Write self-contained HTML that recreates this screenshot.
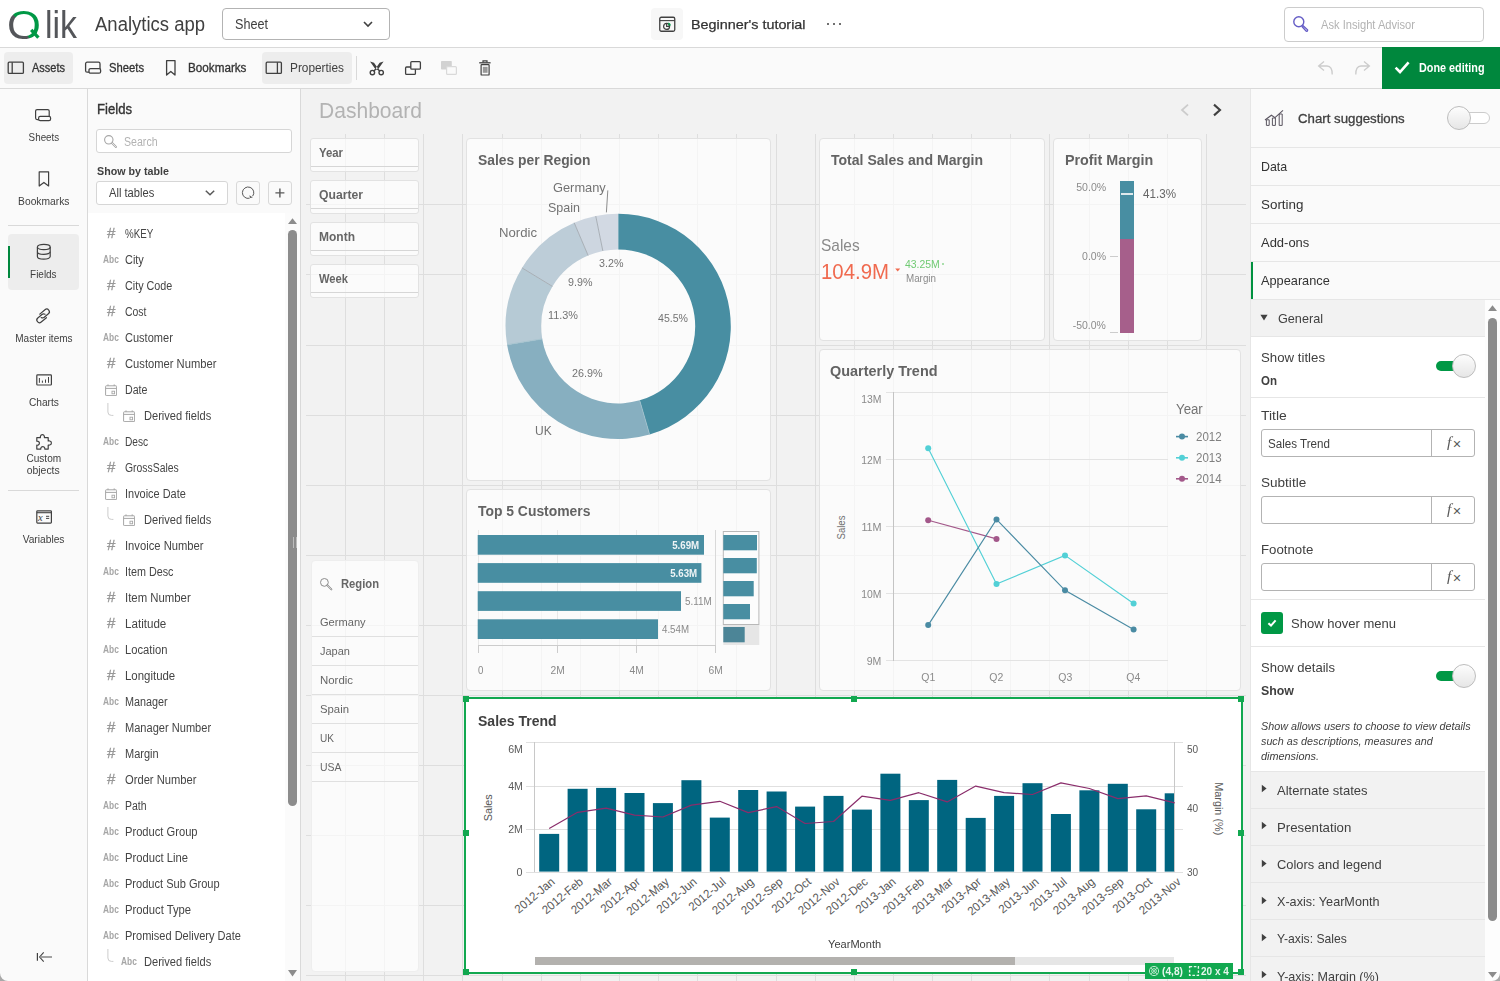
<!DOCTYPE html>
<html lang="en"><head><meta charset="utf-8"><title>Qlik Sense - Beginner's tutorial</title>
<style>
html,body{margin:0;padding:0;background:#fff;}
body{width:1500px;height:981px;overflow:hidden;position:relative;font-family:'Liberation Sans', sans-serif;color:#404040;}
#app{position:absolute;left:0;top:0;width:1500px;height:981px;overflow:hidden;}
#app div,#app svg,#app span.t{position:absolute;box-sizing:border-box;}
#app span.t{white-space:nowrap;transform-origin:0 50%;}
svg text{font-family:'Liberation Sans', sans-serif;}
</style></head><body><div id="app">
<div style="left:0px;top:0px;width:1500px;height:47px;background:#fff;"></div>
<div style="left:0px;top:47px;width:1500px;height:1px;background:#d9d9d9;"></div>
<span class="t" style="left:7.4px;top:5.0px;font-size:40px;line-height:40px;color:transparent;transform:scaleX(1.090);height:34.4px;overflow:hidden;background:conic-gradient(from 0deg at 50% 56%, #009845 0deg, #009845 163deg, #54565a 163deg, #54565a 312deg, #009845 312deg);-webkit-background-clip:text;background-clip:text;">Q</span>
<span class="t" style="left:44.6px;top:6.0px;font-size:38.5px;line-height:38.5px;color:#54565a;transform:scaleX(0.880);">lik</span>
<svg style="left:28px;top:26px;" width="14" height="14" viewBox="0 0 14 14"><path d="M3.2 3.8 L10.4 11.6" stroke="#009845" stroke-width="3.3" fill="none"/></svg>
<span class="t" style="left:95.0px;top:14.0px;font-size:20px;line-height:20px;color:#404040;transform:scaleX(0.925);">Analytics app</span>
<div style="left:222px;top:8px;width:168px;height:32px;border:1px solid #b3b3b3;border-radius:4px;background:#fff;"></div>
<span class="t" style="left:235.0px;top:17.0px;font-size:14px;line-height:14px;color:#404040;transform:scaleX(0.902);">Sheet</span>
<svg style="left:362px;top:19px;" width="12" height="10" viewBox="0 0 12 10"><path d="M2 3 L6 7 L10 3" fill="none" stroke="#404040" stroke-width="1.6"/></svg>
<div style="left:651px;top:8px;width:32px;height:32px;background:#f7f7f7;border-radius:4px;"></div>
<svg style="left:659px;top:16px;" width="17" height="17" viewBox="0 0 17 17"><rect x="0.75" y="1.25" width="15" height="14" rx="1.5" fill="none" stroke="#404040" stroke-width="1.3"/><path d="M0.75 4.6 H15.75" stroke="#404040" stroke-width="1.1"/><circle cx="7.6" cy="10.4" r="3" fill="none" stroke="#404040" stroke-width="1.2"/><path d="M7.6 7.4 V10.4 H10.6" fill="none" stroke="#404040" stroke-width="1.1"/><path d="M9.3 6.6 A3.4 3.4 0 0 1 12 9.4 H9.3 Z" fill="#009845"/></svg>
<span class="t" style="left:691.0px;top:18.0px;font-size:13.5px;line-height:13.5px;color:#333;transform:scaleX(1.064);-webkit-text-stroke:0.25px #333;">Beginner's tutorial</span>
<div style="left:827px;top:23px;width:2px;height:2px;background:#404040;border-radius:1px;"></div>
<div style="left:833px;top:23px;width:2px;height:2px;background:#404040;border-radius:1px;"></div>
<div style="left:839px;top:23px;width:2px;height:2px;background:#404040;border-radius:1px;"></div>
<div style="left:1284px;top:7px;width:200px;height:35px;border:1px solid #ccc;border-radius:4px;background:#fff;"></div>
<svg style="left:1292px;top:15px;" width="18" height="18" viewBox="0 0 18 18"><circle cx="6.8" cy="6.8" r="5" fill="none" stroke="#655dc6" stroke-width="1.4"/><path d="M10.6 10.2 L15.6 14.8 A1.1 1.1 0 0 1 14.2 16.2 L9.7 11.2" fill="none" stroke="#655dc6" stroke-width="1.3"/></svg>
<span class="t" style="left:1321.0px;top:18.0px;font-size:13px;line-height:13px;color:#b3b3b3;transform:scaleX(0.856);">Ask Insight Advisor</span>
<div style="left:0px;top:48px;width:1500px;height:40px;background:#fafafa;"></div>
<div style="left:0px;top:88px;width:1500px;height:1px;background:#d9d9d9;"></div>
<div style="left:4px;top:52px;width:69px;height:32px;background:#ededed;border-radius:4px;"></div>
<svg style="left:7px;top:60px;" width="18" height="16" viewBox="0 0 18 16"><rect x="1.2" y="2.2" width="15.2" height="11.2" rx="1" fill="none" stroke="#404040" stroke-width="1.3"/><path d="M5.2 2.2 V13.4" stroke="#404040" stroke-width="1.3"/></svg>
<span class="t" style="left:32.0px;top:62.0px;font-size:12px;line-height:12px;color:#333;transform:scaleX(0.916);-webkit-text-stroke:0.3px #333;">Assets</span>
<svg style="left:84px;top:60px;" width="18" height="16" viewBox="0 0 18 16"><rect x="1.6" y="2.2" width="14.4" height="10" rx="1.5" fill="none" stroke="#404040" stroke-width="1.3"/><rect x="5" y="8.6" width="11.6" height="4.6" rx="1.5" fill="#fafafa" stroke="#404040" stroke-width="1.3"/></svg>
<span class="t" style="left:108.5px;top:62.0px;font-size:12px;line-height:12px;color:#333;transform:scaleX(0.937);-webkit-text-stroke:0.3px #333;">Sheets</span>
<svg style="left:164px;top:59px;" width="14" height="18" viewBox="0 0 14 18"><path d="M2.6 1.6 H11 V16 L6.8 12.4 L2.6 16 Z" fill="none" stroke="#404040" stroke-width="1.3" stroke-linejoin="round"/></svg>
<span class="t" style="left:187.5px;top:62.0px;font-size:12px;line-height:12px;color:#333;transform:scaleX(0.974);-webkit-text-stroke:0.3px #333;">Bookmarks</span>
<div style="left:262px;top:52px;width:90px;height:32px;background:#ededed;border-radius:4px;"></div>
<svg style="left:265px;top:60px;" width="18" height="16" viewBox="0 0 18 16"><rect x="1.2" y="2.2" width="15.2" height="11.2" rx="1" fill="none" stroke="#404040" stroke-width="1.3"/><path d="M12.4 2.2 V13.4" stroke="#404040" stroke-width="1.3"/></svg>
<span class="t" style="left:290.0px;top:62.0px;font-size:12px;line-height:12px;color:#404040;transform:scaleX(0.987);">Properties</span>
<div style="left:356px;top:56px;width:1px;height:24px;background:#d9d9d9;"></div>
<svg style="left:368px;top:60px;" width="18" height="17" viewBox="0 0 18 17"><path d="M2 1.6 L6 2.8 L10 8.4 L8 10 Z M15.6 1.6 L11.6 2.8 L7.6 8.4 L9.6 10 Z" fill="#404040"/><path d="M8.2 8.8 L5.6 11.2 M9.4 8.8 L12 11.2" stroke="#404040" stroke-width="1.5" fill="none"/><circle cx="4.4" cy="12.6" r="2.2" fill="none" stroke="#404040" stroke-width="1.4"/><circle cx="13.2" cy="12.6" r="2.2" fill="none" stroke="#404040" stroke-width="1.4"/></svg>
<svg style="left:404px;top:60px;" width="18" height="17" viewBox="0 0 18 17"><rect x="1.6" y="7" width="9.8" height="7.4" rx="1" fill="none" stroke="#404040" stroke-width="1.3"/><rect x="6.8" y="1.6" width="9.6" height="7.6" rx="1" fill="#fafafa" stroke="#404040" stroke-width="1.3"/></svg>
<svg style="left:440px;top:60px;" width="18" height="17" viewBox="0 0 18 17"><rect x="1" y="1" width="10.8" height="8.6" rx="0.8" fill="#d2d2d2"/><rect x="6.6" y="6.6" width="9.8" height="7.8" rx="1" fill="#fafafa" stroke="#d9d9d9" stroke-width="1.2"/></svg>
<svg style="left:477px;top:59px;" width="16" height="18" viewBox="0 0 16 18"><path d="M6 3.4 V1.8 H10 V3.4" fill="none" stroke="#404040" stroke-width="1.2"/><path d="M2.2 3.8 H13.6" stroke="#404040" stroke-width="1.3"/><rect x="4.1" y="5.6" width="8" height="10.4" rx="0.6" fill="none" stroke="#404040" stroke-width="1.2"/><rect x="5.8" y="7.8" width="4.8" height="6" fill="#999"/></svg>
<svg style="left:1316px;top:59px;" width="20" height="18" viewBox="0 0 20 18"><path d="M8 2.4 L2.6 7 L8 11.4 M2.8 7 H11 Q16.4 7.2 16.2 15.6" fill="none" stroke="#ccc" stroke-width="1.3"/></svg>
<svg style="left:1352px;top:59px;" width="20" height="18" viewBox="0 0 20 18"><path d="M12 2.4 L17.4 7 L12 11.4 M17.2 7 H9 Q3.6 7.2 3.8 15.6" fill="none" stroke="#ccc" stroke-width="1.3"/></svg>
<div style="left:1382px;top:47px;width:118px;height:42px;background:#00873d;"></div>
<svg style="left:1394px;top:60px;" width="17" height="15" viewBox="0 0 17 15"><path d="M1.6 7.6 L6 12 L14.6 2.4" fill="none" stroke="#fff" stroke-width="2.6"/></svg>
<span class="t" style="left:1419.0px;top:61.0px;font-size:13px;line-height:13px;color:#fff;transform:scaleX(0.832);font-weight:700;">Done editing</span>
<div style="left:0px;top:89px;width:87px;height:892px;background:#fafafa;"></div>
<div style="left:87px;top:89px;width:1px;height:892px;background:#d9d9d9;"></div>
<svg style="left:33px;top:107px;" width="20" height="16" viewBox="0 0 20 16"><rect x="2.6" y="2.6" width="13.6" height="10" rx="1.5" fill="none" stroke="#404040" stroke-width="1.2"/><rect x="5.6" y="9.4" width="12" height="4.2" rx="1.6" fill="#fafafa" stroke="#404040" stroke-width="1.2"/></svg>
<span class="t" style="left:25.6px;top:132.0px;font-size:11.5px;line-height:11.5px;color:#404040;transform:scaleX(0.854);transform-origin:50% 50%;">Sheets</span>
<svg style="left:36px;top:169px;" width="16" height="20" viewBox="0 0 16 20"><path d="M3.2 2.8 H12.6 V17 L7.9 13.4 L3.2 17 Z" fill="none" stroke="#404040" stroke-width="1.2" stroke-linejoin="round"/></svg>
<span class="t" style="left:14.7px;top:196.0px;font-size:11.5px;line-height:11.5px;color:#404040;transform:scaleX(0.893);transform-origin:50% 50%;">Bookmarks</span>
<div style="left:8px;top:225px;width:71px;height:1px;background:#d9d9d9;"></div>
<div style="left:8px;top:234px;width:71px;height:56px;background:#ededed;border-radius:4px;"></div>
<div style="left:8px;top:246px;width:2px;height:32px;background:#00873d;"></div>
<svg style="left:35px;top:242px;" width="18" height="20" viewBox="0 0 18 20"><ellipse cx="8.8" cy="5" rx="6.4" ry="2.6" fill="none" stroke="#404040" stroke-width="1.2"/><path d="M2.4 5 V14.6 A6.4 2.6 0 0 0 15.2 14.6 V5" fill="none" stroke="#404040" stroke-width="1.2"/><path d="M2.4 9.8 A6.4 2.6 0 0 0 15.2 9.8" fill="none" stroke="#404040" stroke-width="1.2"/></svg>
<span class="t" style="left:28.2px;top:269.0px;font-size:11.5px;line-height:11.5px;color:#404040;transform:scaleX(0.864);transform-origin:50% 50%;">Fields</span>
<svg style="left:33px;top:305px;" width="21" height="21" viewBox="0 0 21 21"><g transform="translate(10.1 10.9) rotate(-40)" fill="none" stroke="#404040" stroke-width="1.2" stroke-linecap="round"><path d="M1.4 3.5 L-5.4 3.5 A2.65 2.65 0 0 1 -5.4 -1.8 L0 -1.8 A2.65 2.65 0 0 1 2.5 0"/><path d="M-1.4 -3.5 L5.4 -3.5 A2.65 2.65 0 0 1 5.4 1.8 L0 1.8 A2.65 2.65 0 0 1 -2.5 0"/></g></svg>
<span class="t" style="left:10.6px;top:333.0px;font-size:11.5px;line-height:11.5px;color:#404040;transform:scaleX(0.870);transform-origin:50% 50%;">Master items</span>
<svg style="left:35px;top:372px;" width="19" height="16" viewBox="0 0 19 16"><rect x="1.8" y="2.9" width="14.6" height="10.1" rx="0.8" fill="none" stroke="#404040" stroke-width="1.2"/><path d="M4.4 6 V10.8 M7.4 8.6 V10.8 M10.5 7.5 V10.8 M13.5 5 V10.8" stroke="#404040" stroke-width="1"/></svg>
<span class="t" style="left:26.6px;top:397.0px;font-size:11.5px;line-height:11.5px;color:#404040;transform:scaleX(0.886);transform-origin:50% 50%;">Charts</span>
<svg style="left:34px;top:432px;" width="20" height="20" viewBox="0 0 20 20"><path d="M2.8 5.7 H6.4 C6.4 5.7 6 2.6 8.4 2.6 C10.8 2.6 10.4 5.7 10.4 5.7 H14.2 V9 C14.2 9 17.4 8.4 17.4 11 C17.4 13.6 14.2 13 14.2 13 V17.1 H10.8 C10.8 17.1 11.2 14.6 8.8 14.6 C6.4 14.6 6.8 17.1 6.8 17.1 H2.8 V13.2 C2.8 13.2 5.4 13.6 5.4 11.2 C5.4 8.8 2.8 9.2 2.8 9.2 Z" fill="none" stroke="#404040" stroke-width="1.2" stroke-linejoin="round"/></svg>
<span class="t" style="left:23.7px;top:453.0px;font-size:11.5px;line-height:11.5px;color:#404040;transform:scaleX(0.876);transform-origin:50% 50%;">Custom</span>
<span class="t" style="left:25.3px;top:465.0px;font-size:11.5px;line-height:11.5px;color:#404040;transform:scaleX(0.906);transform-origin:50% 50%;">objects</span>
<div style="left:8px;top:490px;width:71px;height:1px;background:#d9d9d9;"></div>
<svg style="left:35px;top:509px;" width="19" height="16" viewBox="0 0 19 16"><rect x="1.8" y="1.8" width="14.6" height="12.3" rx="0.8" fill="none" stroke="#404040" stroke-width="1.2"/><path d="M1.8 3.7 H16.4" stroke="#404040" stroke-width="1.1"/><path d="M11 7.3 H14.2 M11 9.4 H14.2" stroke="#404040" stroke-width="1"/><text x="3" y="12" font-size="10.5" font-style="italic" style="font-family:Liberation Serif, serif" fill="#404040">x</text></svg>
<span class="t" style="left:20.0px;top:534.0px;font-size:11.5px;line-height:11.5px;color:#404040;transform:scaleX(0.888);transform-origin:50% 50%;">Variables</span>
<svg style="left:34px;top:949px;" width="20" height="16" viewBox="0 0 20 16"><path d="M3.4 4.1 V11.8" fill="none" stroke="#404040" stroke-width="1.2"/><path d="M9.7 3.3 L5.6 8 L9.7 12.7" fill="none" stroke="#404040" stroke-width="1.1"/><path d="M5.8 8 H18" stroke="#8c8c8c" stroke-width="1.6"/></svg>
<svg style="left:0px;top:973px;" width="8" height="8" viewBox="0 0 8 8"><path d="M0 0 V8 H8 A8 8 0 0 1 0 0 Z" fill="#a8a8a8"/></svg>
<svg style="left:1492px;top:973px;z-index:5;" width="8" height="8" viewBox="0 0 8 8"><path d="M8 0 V8 H0 A8 8 0 0 0 8 0 Z" fill="#a8a8a8"/></svg>
<div style="left:88px;top:89px;width:212px;height:124px;background:#fafafa;"></div>
<div style="left:88px;top:213px;width:212px;height:768px;background:#fff;"></div>
<div style="left:300px;top:89px;width:1px;height:892px;background:#d9d9d9;"></div>
<span class="t" style="left:96.5px;top:102.0px;font-size:14px;line-height:14px;color:#333;transform:scaleX(0.937);-webkit-text-stroke:0.35px #333;">Fields</span>
<div style="left:96px;top:129px;width:196px;height:24px;border:1px solid #d6d6d6;border-radius:3px;background:#fff;"></div>
<svg style="left:103px;top:134px;" width="15" height="15" viewBox="0 0 15 15"><circle cx="5.8" cy="5.8" r="4.2" fill="none" stroke="#a6a6a6" stroke-width="1.1"/><path d="M8.8 8.8 L13 13" stroke="#a6a6a6" stroke-width="2" stroke-linecap="round"/><path d="M8.8 8.8 L13 13" stroke="#fff" stroke-width="0.7" stroke-linecap="round"/></svg>
<span class="t" style="left:124.3px;top:136.0px;font-size:12px;line-height:12px;color:#b3b3b3;transform:scaleX(0.883);">Search</span>
<span class="t" style="left:96.5px;top:166.0px;font-size:11.5px;line-height:11.5px;color:#404040;transform:scaleX(0.931);font-weight:700;">Show by table</span>
<div style="left:96px;top:181px;width:132px;height:24px;border:1px solid #d6d6d6;border-radius:3px;background:#fff;"></div>
<span class="t" style="left:109.0px;top:187.0px;font-size:12px;line-height:12px;color:#404040;transform:scaleX(0.930);">All tables</span>
<svg style="left:204px;top:188px;" width="12" height="10" viewBox="0 0 12 10"><path d="M1.8 2.8 L6 6.8 L10.2 2.8" fill="none" stroke="#595959" stroke-width="1.5"/></svg>
<div style="left:236px;top:181px;width:24px;height:24px;border:1px solid #d9d9d9;border-radius:3px;background:#fafafa;"></div>
<svg style="left:240px;top:185px;" width="16" height="16" viewBox="0 0 16 16"><path d="M9.6 13.2 A5.7 5.7 0 1 1 12.6 11.2" fill="none" stroke="#595959" stroke-width="1"/><path d="M9.4 10.2 L10 13 L12.8 12.4 Z" fill="#595959"/></svg>
<div style="left:268px;top:181px;width:24px;height:24px;border:1px solid #d9d9d9;border-radius:3px;background:#fafafa;"></div>
<svg style="left:274px;top:187px;" width="12" height="12" viewBox="0 0 12 12"><path d="M5.9 1.4 V10.4 M1.4 5.9 H10.4" stroke="#595959" stroke-width="1.4"/></svg>
<span class="t" style="left:106.6px;top:226.0px;font-size:14px;line-height:14px;color:#999;transform:scaleX(1.080);-webkit-text-stroke:0.3px #999;">#</span>
<span class="t" style="left:125.4px;top:228.0px;font-size:12px;line-height:12px;color:#454545;transform:scaleX(0.813);">%KEY</span>
<span class="t" style="left:103.2px;top:255.0px;font-size:10px;line-height:10px;color:#a6a6a6;transform:scaleX(0.836);font-weight:700;">Abc</span>
<span class="t" style="left:125.4px;top:254.0px;font-size:12px;line-height:12px;color:#454545;transform:scaleX(0.909);">City</span>
<span class="t" style="left:106.6px;top:278.0px;font-size:14px;line-height:14px;color:#999;transform:scaleX(1.080);-webkit-text-stroke:0.3px #999;">#</span>
<span class="t" style="left:125.4px;top:280.0px;font-size:12px;line-height:12px;color:#454545;transform:scaleX(0.898);">City Code</span>
<span class="t" style="left:106.6px;top:304.0px;font-size:14px;line-height:14px;color:#999;transform:scaleX(1.080);-webkit-text-stroke:0.3px #999;">#</span>
<span class="t" style="left:125.4px;top:306.0px;font-size:12px;line-height:12px;color:#454545;transform:scaleX(0.871);">Cost</span>
<span class="t" style="left:103.2px;top:333.0px;font-size:10px;line-height:10px;color:#a6a6a6;transform:scaleX(0.836);font-weight:700;">Abc</span>
<span class="t" style="left:125.4px;top:332.0px;font-size:12px;line-height:12px;color:#454545;transform:scaleX(0.919);">Customer</span>
<span class="t" style="left:106.6px;top:356.0px;font-size:14px;line-height:14px;color:#999;transform:scaleX(1.080);-webkit-text-stroke:0.3px #999;">#</span>
<span class="t" style="left:125.4px;top:358.0px;font-size:12px;line-height:12px;color:#454545;transform:scaleX(0.932);">Customer Number</span>
<svg style="left:105px;top:383.6px;" width="12" height="12" viewBox="0 0 12 12"><rect x="0.6" y="1.8" width="11" height="9.8" rx="0.6" fill="none" stroke="#a6a6a6" stroke-width="1"/><path d="M0.6 4.4 H11.6 M3 0.4 V2 M9.2 0.4 V2" stroke="#a6a6a6" stroke-width="1"/><rect x="7" y="7.2" width="2.6" height="2.6" fill="none" stroke="#a6a6a6" stroke-width="0.9"/></svg>
<span class="t" style="left:125.4px;top:384.0px;font-size:12px;line-height:12px;color:#454545;transform:scaleX(0.887);">Date</span>
<svg style="left:105px;top:402px;" width="10" height="16" viewBox="0 0 10 16"><path d="M2.9 1 V10 Q2.9 13.4 6.4 13.4 H8.4" fill="none" stroke="#ccc" stroke-width="1"/></svg>
<svg style="left:123px;top:409.6px;" width="12" height="12" viewBox="0 0 12 12"><rect x="0.6" y="1.8" width="11" height="9.8" rx="0.6" fill="none" stroke="#a6a6a6" stroke-width="1"/><path d="M0.6 4.4 H11.6 M3 0.4 V2 M9.2 0.4 V2" stroke="#a6a6a6" stroke-width="1"/><rect x="7" y="7.2" width="2.6" height="2.6" fill="none" stroke="#a6a6a6" stroke-width="0.9"/></svg>
<span class="t" style="left:143.5px;top:410.0px;font-size:12px;line-height:12px;color:#454545;transform:scaleX(0.924);">Derived fields</span>
<span class="t" style="left:103.2px;top:437.0px;font-size:10px;line-height:10px;color:#a6a6a6;transform:scaleX(0.836);font-weight:700;">Abc</span>
<span class="t" style="left:125.4px;top:436.0px;font-size:12px;line-height:12px;color:#454545;transform:scaleX(0.848);">Desc</span>
<span class="t" style="left:106.6px;top:460.0px;font-size:14px;line-height:14px;color:#999;transform:scaleX(1.080);-webkit-text-stroke:0.3px #999;">#</span>
<span class="t" style="left:125.4px;top:462.0px;font-size:12px;line-height:12px;color:#454545;transform:scaleX(0.867);">GrossSales</span>
<svg style="left:105px;top:487.6px;" width="12" height="12" viewBox="0 0 12 12"><rect x="0.6" y="1.8" width="11" height="9.8" rx="0.6" fill="none" stroke="#a6a6a6" stroke-width="1"/><path d="M0.6 4.4 H11.6 M3 0.4 V2 M9.2 0.4 V2" stroke="#a6a6a6" stroke-width="1"/><rect x="7" y="7.2" width="2.6" height="2.6" fill="none" stroke="#a6a6a6" stroke-width="0.9"/></svg>
<span class="t" style="left:125.4px;top:488.0px;font-size:12px;line-height:12px;color:#454545;transform:scaleX(0.912);">Invoice Date</span>
<svg style="left:105px;top:506px;" width="10" height="16" viewBox="0 0 10 16"><path d="M2.9 1 V10 Q2.9 13.4 6.4 13.4 H8.4" fill="none" stroke="#ccc" stroke-width="1"/></svg>
<svg style="left:123px;top:513.6px;" width="12" height="12" viewBox="0 0 12 12"><rect x="0.6" y="1.8" width="11" height="9.8" rx="0.6" fill="none" stroke="#a6a6a6" stroke-width="1"/><path d="M0.6 4.4 H11.6 M3 0.4 V2 M9.2 0.4 V2" stroke="#a6a6a6" stroke-width="1"/><rect x="7" y="7.2" width="2.6" height="2.6" fill="none" stroke="#a6a6a6" stroke-width="0.9"/></svg>
<span class="t" style="left:143.5px;top:514.0px;font-size:12px;line-height:12px;color:#454545;transform:scaleX(0.924);">Derived fields</span>
<span class="t" style="left:106.6px;top:538.0px;font-size:14px;line-height:14px;color:#999;transform:scaleX(1.080);-webkit-text-stroke:0.3px #999;">#</span>
<span class="t" style="left:125.4px;top:540.0px;font-size:12px;line-height:12px;color:#454545;transform:scaleX(0.935);">Invoice Number</span>
<span class="t" style="left:103.2px;top:567.0px;font-size:10px;line-height:10px;color:#a6a6a6;transform:scaleX(0.836);font-weight:700;">Abc</span>
<span class="t" style="left:125.4px;top:566.0px;font-size:12px;line-height:12px;color:#454545;transform:scaleX(0.898);">Item Desc</span>
<span class="t" style="left:106.6px;top:590.0px;font-size:14px;line-height:14px;color:#999;transform:scaleX(1.080);-webkit-text-stroke:0.3px #999;">#</span>
<span class="t" style="left:125.4px;top:592.0px;font-size:12px;line-height:12px;color:#454545;transform:scaleX(0.947);">Item Number</span>
<span class="t" style="left:106.6px;top:616.0px;font-size:14px;line-height:14px;color:#999;transform:scaleX(1.080);-webkit-text-stroke:0.3px #999;">#</span>
<span class="t" style="left:125.4px;top:618.0px;font-size:12px;line-height:12px;color:#454545;transform:scaleX(0.967);">Latitude</span>
<span class="t" style="left:103.2px;top:645.0px;font-size:10px;line-height:10px;color:#a6a6a6;transform:scaleX(0.836);font-weight:700;">Abc</span>
<span class="t" style="left:125.4px;top:644.0px;font-size:12px;line-height:12px;color:#454545;transform:scaleX(0.934);">Location</span>
<span class="t" style="left:106.6px;top:668.0px;font-size:14px;line-height:14px;color:#999;transform:scaleX(1.080);-webkit-text-stroke:0.3px #999;">#</span>
<span class="t" style="left:125.4px;top:670.0px;font-size:12px;line-height:12px;color:#454545;transform:scaleX(0.952);">Longitude</span>
<span class="t" style="left:103.2px;top:697.0px;font-size:10px;line-height:10px;color:#a6a6a6;transform:scaleX(0.836);font-weight:700;">Abc</span>
<span class="t" style="left:125.4px;top:696.0px;font-size:12px;line-height:12px;color:#454545;transform:scaleX(0.901);">Manager</span>
<span class="t" style="left:106.6px;top:720.0px;font-size:14px;line-height:14px;color:#999;transform:scaleX(1.080);-webkit-text-stroke:0.3px #999;">#</span>
<span class="t" style="left:125.4px;top:722.0px;font-size:12px;line-height:12px;color:#454545;transform:scaleX(0.922);">Manager Number</span>
<span class="t" style="left:106.6px;top:746.0px;font-size:14px;line-height:14px;color:#999;transform:scaleX(1.080);-webkit-text-stroke:0.3px #999;">#</span>
<span class="t" style="left:125.4px;top:748.0px;font-size:12px;line-height:12px;color:#454545;transform:scaleX(0.916);">Margin</span>
<span class="t" style="left:106.6px;top:772.0px;font-size:14px;line-height:14px;color:#999;transform:scaleX(1.080);-webkit-text-stroke:0.3px #999;">#</span>
<span class="t" style="left:125.4px;top:774.0px;font-size:12px;line-height:12px;color:#454545;transform:scaleX(0.932);">Order Number</span>
<span class="t" style="left:103.2px;top:801.0px;font-size:10px;line-height:10px;color:#a6a6a6;transform:scaleX(0.836);font-weight:700;">Abc</span>
<span class="t" style="left:125.4px;top:800.0px;font-size:12px;line-height:12px;color:#454545;transform:scaleX(0.871);">Path</span>
<span class="t" style="left:103.2px;top:827.0px;font-size:10px;line-height:10px;color:#a6a6a6;transform:scaleX(0.836);font-weight:700;">Abc</span>
<span class="t" style="left:125.4px;top:826.0px;font-size:12px;line-height:12px;color:#454545;transform:scaleX(0.930);">Product Group</span>
<span class="t" style="left:103.2px;top:853.0px;font-size:10px;line-height:10px;color:#a6a6a6;transform:scaleX(0.836);font-weight:700;">Abc</span>
<span class="t" style="left:125.4px;top:852.0px;font-size:12px;line-height:12px;color:#454545;transform:scaleX(0.936);">Product Line</span>
<span class="t" style="left:103.2px;top:879.0px;font-size:10px;line-height:10px;color:#a6a6a6;transform:scaleX(0.836);font-weight:700;">Abc</span>
<span class="t" style="left:125.4px;top:878.0px;font-size:12px;line-height:12px;color:#454545;transform:scaleX(0.921);">Product Sub Group</span>
<span class="t" style="left:103.2px;top:905.0px;font-size:10px;line-height:10px;color:#a6a6a6;transform:scaleX(0.836);font-weight:700;">Abc</span>
<span class="t" style="left:125.4px;top:904.0px;font-size:12px;line-height:12px;color:#454545;transform:scaleX(0.938);">Product Type</span>
<span class="t" style="left:103.2px;top:931.0px;font-size:10px;line-height:10px;color:#a6a6a6;transform:scaleX(0.836);font-weight:700;">Abc</span>
<span class="t" style="left:125.4px;top:930.0px;font-size:12px;line-height:12px;color:#454545;transform:scaleX(0.919);">Promised Delivery Date</span>
<svg style="left:105px;top:948px;" width="10" height="16" viewBox="0 0 10 16"><path d="M2.9 1 V10 Q2.9 13.4 6.4 13.4 H8.4" fill="none" stroke="#ccc" stroke-width="1"/></svg>
<span class="t" style="left:121.2px;top:957.0px;font-size:10px;line-height:10px;color:#a6a6a6;transform:scaleX(0.836);font-weight:700;">Abc</span>
<span class="t" style="left:143.5px;top:956.0px;font-size:12px;line-height:12px;color:#454545;transform:scaleX(0.924);">Derived fields</span>
<div style="left:285px;top:213px;width:15px;height:768px;background:#fbfbfb;"></div>
<svg style="left:287px;top:217px;" width="11" height="8" viewBox="0 0 11 8"><path d="M1 7 L5.5 1.2 L10 7 Z" fill="#8c8c8c"/></svg>
<div style="left:288px;top:230px;width:9px;height:576px;background:#8c8c8c;border-radius:4.5px;"></div>
<svg style="left:287px;top:969px;" width="11" height="9" viewBox="0 0 11 9"><path d="M1 1 L5.5 7.6 L10 1 Z" fill="#8c8c8c"/></svg>
<div style="left:293px;top:537px;width:1px;height:11px;background:#bdbdbd;"></div>
<div style="left:296px;top:537px;width:1px;height:11px;background:#bdbdbd;"></div>
<div style="left:301px;top:89px;width:949px;height:892px;background:#f2f2f2;"></div>
<span class="t" style="left:318.7px;top:101.0px;font-size:21.5px;line-height:21.5px;color:#b3b3b3;transform:scaleX(0.979);">Dashboard</span>
<svg style="left:1178px;top:102px;" width="14" height="16" viewBox="0 0 14 16"><path d="M10 2.6 L4 8 L10 13.4" fill="none" stroke="#ccc" stroke-width="1.8"/></svg>
<svg style="left:1210px;top:102px;" width="14" height="16" viewBox="0 0 14 16"><path d="M4 2.6 L10 8 L4 13.4" fill="none" stroke="#404040" stroke-width="2.1"/></svg>
<svg style="left:301px;top:89px;" width="949" height="892" viewBox="0 0 949 892"><rect x="44" y="45" width="1" height="847" fill="#dedede"/><rect x="83" y="45" width="1" height="847" fill="#dedede"/><rect x="122" y="45" width="1" height="847" fill="#dedede"/><rect x="161" y="45" width="1" height="847" fill="#dedede"/><rect x="201" y="45" width="1" height="847" fill="#dedede"/><rect x="240" y="45" width="1" height="847" fill="#dedede"/><rect x="279" y="45" width="1" height="847" fill="#dedede"/><rect x="318" y="45" width="1" height="847" fill="#dedede"/><rect x="357" y="45" width="1" height="847" fill="#dedede"/><rect x="396" y="45" width="1" height="847" fill="#dedede"/><rect x="435" y="45" width="1" height="847" fill="#dedede"/><rect x="475" y="45" width="1" height="847" fill="#dedede"/><rect x="514" y="45" width="1" height="847" fill="#dedede"/><rect x="553" y="45" width="1" height="847" fill="#dedede"/><rect x="592" y="45" width="1" height="847" fill="#dedede"/><rect x="631" y="45" width="1" height="847" fill="#dedede"/><rect x="670" y="45" width="1" height="847" fill="#dedede"/><rect x="709" y="45" width="1" height="847" fill="#dedede"/><rect x="748" y="45" width="1" height="847" fill="#dedede"/><rect x="788" y="45" width="1" height="847" fill="#dedede"/><rect x="827" y="45" width="1" height="847" fill="#dedede"/><rect x="866" y="45" width="1" height="847" fill="#dedede"/><rect x="905" y="45" width="1" height="847" fill="#dedede"/><rect x="5" y="115" width="940" height="1" fill="#dedede"/><rect x="5" y="185" width="940" height="1" fill="#dedede"/><rect x="5" y="256" width="940" height="1" fill="#dedede"/><rect x="5" y="326" width="940" height="1" fill="#dedede"/><rect x="5" y="396" width="940" height="1" fill="#dedede"/><rect x="5" y="466" width="940" height="1" fill="#dedede"/><rect x="5" y="536" width="940" height="1" fill="#dedede"/><rect x="5" y="606" width="940" height="1" fill="#dedede"/><rect x="5" y="676" width="940" height="1" fill="#dedede"/><rect x="5" y="746" width="940" height="1" fill="#dedede"/><rect x="5" y="816" width="940" height="1" fill="#dedede"/><rect x="5" y="886" width="940" height="1" fill="#dedede"/></svg>
<div style="left:310px;top:138px;width:109px;height:34px;background:rgba(255,255,255,0.68);border:1px solid #e2e2e2;border-radius:4px;border-radius:3px;"></div>
<div style="left:311px;top:166px;width:107px;height:1px;background:#d6d6d6;"></div>
<span class="t" style="left:319.0px;top:147.0px;font-size:12.5px;line-height:12.5px;color:#666;transform:scaleX(0.908);font-weight:700;">Year</span>
<div style="left:310px;top:180px;width:109px;height:34px;background:rgba(255,255,255,0.68);border:1px solid #e2e2e2;border-radius:4px;border-radius:3px;"></div>
<div style="left:311px;top:208px;width:107px;height:1px;background:#d6d6d6;"></div>
<span class="t" style="left:319.0px;top:189.0px;font-size:12.5px;line-height:12.5px;color:#666;transform:scaleX(0.974);font-weight:700;">Quarter</span>
<div style="left:310px;top:222px;width:109px;height:34px;background:rgba(255,255,255,0.68);border:1px solid #e2e2e2;border-radius:4px;border-radius:3px;"></div>
<div style="left:311px;top:250px;width:107px;height:1px;background:#d6d6d6;"></div>
<span class="t" style="left:319.0px;top:231.0px;font-size:12.5px;line-height:12.5px;color:#666;transform:scaleX(0.960);font-weight:700;">Month</span>
<div style="left:310px;top:264px;width:109px;height:34px;background:rgba(255,255,255,0.68);border:1px solid #e2e2e2;border-radius:4px;border-radius:3px;"></div>
<div style="left:311px;top:292px;width:107px;height:1px;background:#d6d6d6;"></div>
<span class="t" style="left:319.0px;top:273.0px;font-size:12.5px;line-height:12.5px;color:#666;transform:scaleX(0.894);font-weight:700;">Week</span>
<div style="left:466px;top:138px;width:305px;height:343px;background:rgba(255,255,255,0.68);border:1px solid #e2e2e2;border-radius:4px;"></div>
<span class="t" style="left:478.0px;top:153.0px;font-size:14.5px;line-height:14.5px;color:#636363;transform:scaleX(0.955);font-weight:700;">Sales per Region</span>
<svg style="left:466px;top:138px;" width="305" height="343" viewBox="0 0 305 343"><path d="M152.20 75.80 A112.6 112.6 0 0 1 183.61 296.53 L173.68 262.34 A77 77 0 0 0 152.20 111.40 Z" fill="#488ea2"/><path d="M183.61 296.53 A112.6 112.6 0 0 1 41.11 206.79 L76.23 200.98 A77 77 0 0 0 173.68 262.34 Z" fill="#87afc0"/><path d="M41.11 206.79 A112.6 112.6 0 0 1 55.99 129.90 L86.41 148.40 A77 77 0 0 0 76.23 200.98 Z" fill="#b6cad5"/><path d="M55.99 129.90 A112.6 112.6 0 0 1 108.20 84.75 L122.11 117.52 A77 77 0 0 0 86.41 148.40 Z" fill="#bdcdd8"/><path d="M108.20 84.75 A112.6 112.6 0 0 1 129.75 78.06 L136.85 112.95 A77 77 0 0 0 122.11 117.52 Z" fill="#cdd6e0"/><path d="M129.75 78.06 A112.6 112.6 0 0 1 152.20 75.80 L152.20 111.40 A77 77 0 0 0 136.85 112.95 Z" fill="#d2d9e3"/><path d="M183.61 296.53 L173.68 262.34" stroke="#9fc0cc" stroke-width="0.8"/><path d="M41.11 206.79 L76.23 200.98" stroke="#9fc0cc" stroke-width="0.8"/><path d="M55.99 129.90 L86.41 148.40" stroke="#a3a9b0" stroke-width="0.9"/><path d="M108.20 84.75 L122.11 117.52" stroke="#a3a9b0" stroke-width="0.9"/><path d="M129.75 78.06 L136.85 112.95" stroke="#a3a9b0" stroke-width="0.9"/><path d="M141.79999999999995 52.400000000000006 L140.39999999999998 74.4" stroke="#8c8c8c" stroke-width="1"/></svg>
<span class="t" style="left:553.0px;top:181.0px;font-size:13px;line-height:13px;color:#737373;transform:scaleX(0.987);">Germany</span>
<span class="t" style="left:548.4px;top:201.0px;font-size:13px;line-height:13px;color:#737373;transform:scaleX(0.962);">Spain</span>
<span class="t" style="left:498.5px;top:226.0px;font-size:13px;line-height:13px;color:#737373;transform:scaleX(1.011);">Nordic</span>
<span class="t" style="left:535.3px;top:424.0px;font-size:13px;line-height:13px;color:#737373;transform:scaleX(0.925);">UK</span>
<span class="t" style="left:599.0px;top:258.0px;font-size:11.5px;line-height:11.5px;color:#737373;transform:scaleX(0.931);">3.2%</span>
<span class="t" style="left:567.5px;top:277.0px;font-size:11.5px;line-height:11.5px;color:#737373;transform:scaleX(0.931);">9.9%</span>
<span class="t" style="left:548.2px;top:310.0px;font-size:11.5px;line-height:11.5px;color:#737373;transform:scaleX(0.944);">11.3%</span>
<span class="t" style="left:657.5px;top:313.0px;font-size:11.5px;line-height:11.5px;color:#737373;transform:scaleX(0.920);">45.5%</span>
<span class="t" style="left:572.4px;top:368.0px;font-size:11.5px;line-height:11.5px;color:#737373;transform:scaleX(0.938);">26.9%</span>
<div style="left:819px;top:138px;width:226px;height:203px;background:rgba(255,255,255,0.68);border:1px solid #e2e2e2;border-radius:4px;"></div>
<span class="t" style="left:830.5px;top:153.0px;font-size:14.5px;line-height:14.5px;color:#636363;transform:scaleX(0.969);font-weight:700;">Total Sales and Margin</span>
<span class="t" style="left:820.6px;top:237.0px;font-size:17px;line-height:17px;color:#8a8a8a;transform:scaleX(0.908);">Sales</span>
<span class="t" style="left:821.2px;top:261.0px;font-size:22px;line-height:22px;color:#f06a4f;transform:scaleX(0.927);">104.9M</span>
<svg style="left:894px;top:267px;" width="8" height="6" viewBox="0 0 8 6"><path d="M1.2 1.6 H6.2 L3.7 4.6 Z" fill="#f06a4f"/></svg>
<span class="t" style="left:905.0px;top:259.0px;font-size:11.5px;line-height:11.5px;color:#6fca72;transform:scaleX(0.905);">43.25M</span>
<div style="left:942px;top:263px;width:2px;height:2px;background:#8fd692;border-radius:1px;"></div>
<span class="t" style="left:905.6px;top:273.0px;font-size:10.5px;line-height:10.5px;color:#8a8a8a;transform:scaleX(0.934);">Margin</span>
<div style="left:1053px;top:138px;width:149px;height:203px;background:rgba(255,255,255,0.68);border:1px solid #e2e2e2;border-radius:4px;"></div>
<span class="t" style="left:1065.2px;top:153.0px;font-size:14.5px;line-height:14.5px;color:#636363;transform:scaleX(0.987);font-weight:700;">Profit Margin</span>
<div style="left:1120px;top:181px;width:14px;height:58px;background:#488ea2;"></div>
<div style="left:1120px;top:239px;width:14px;height:94px;background:#a65f8b;"></div>
<div style="left:1121px;top:193px;width:12px;height:2px;background:#dfe9ec;"></div>
<div style="left:1110px;top:256px;width:8px;height:1px;background:#ccc;"></div>
<div style="left:1110px;top:332px;width:8px;height:1px;background:#ccc;"></div>
<span class="t" style="left:1074.6px;top:182.0px;font-size:11px;line-height:11px;color:#8c8c8c;transform:scaleX(0.961);transform-origin:100% 50%;">50.0%</span>
<span class="t" style="left:1080.7px;top:251.0px;font-size:11px;line-height:11px;color:#8c8c8c;transform:scaleX(0.957);transform-origin:100% 50%;">0.0%</span>
<span class="t" style="left:1070.9px;top:320.0px;font-size:11px;line-height:11px;color:#8c8c8c;transform:scaleX(0.952);transform-origin:100% 50%;">-50.0%</span>
<span class="t" style="left:1143.0px;top:188.0px;font-size:12.5px;line-height:12.5px;color:#666;transform:scaleX(0.931);">41.3%</span>
<div style="left:819px;top:349px;width:422px;height:342px;background:rgba(255,255,255,0.68);border:1px solid #e2e2e2;border-radius:4px;"></div>
<span class="t" style="left:830.3px;top:364.0px;font-size:14.5px;line-height:14.5px;color:#636363;transform:scaleX(0.996);font-weight:700;">Quarterly Trend</span>
<svg style="left:819px;top:349px;" width="422" height="342" viewBox="0 0 422 342"><rect x="67" y="43" width="282" height="1" fill="#e3e3e3"/><rect x="67" y="110" width="282" height="1" fill="#e3e3e3"/><rect x="67" y="177" width="282" height="1" fill="#e3e3e3"/><rect x="67" y="244" width="282" height="1" fill="#e3e3e3"/><rect x="67" y="311" width="282" height="1" fill="#e3e3e3"/><rect x="74" y="43" width="1" height="269" fill="#c4c4c4"/><polyline points="109.2,171.2 177.5,189.9" fill="none" stroke="#a3588a" stroke-width="1.15"/><circle cx="109.2" cy="171.2" r="3" fill="#a3588a"/><circle cx="177.5" cy="189.9" r="3" fill="#a3588a"/><polyline points="109.2,99.3 177.5,235.0 246.0,206.4 314.6,254.5" fill="none" stroke="#52d0d6" stroke-width="1.15"/><circle cx="109.2" cy="99.3" r="3" fill="#52d0d6"/><circle cx="177.5" cy="235.0" r="3" fill="#52d0d6"/><circle cx="246.0" cy="206.4" r="3" fill="#52d0d6"/><circle cx="314.6" cy="254.5" r="3" fill="#52d0d6"/><polyline points="109.2,276.1 177.5,170.4 246.0,241.3 314.6,280.5" fill="none" stroke="#4a8ba3" stroke-width="1.15"/><circle cx="109.2" cy="276.1" r="3" fill="#4a8ba3"/><circle cx="177.5" cy="170.4" r="3" fill="#4a8ba3"/><circle cx="246.0" cy="241.3" r="3" fill="#4a8ba3"/><circle cx="314.6" cy="280.5" r="3" fill="#4a8ba3"/><rect x="357" y="86.8" width="12" height="1.6" fill="#4a8ba3"/><circle cx="363" cy="87.6" r="3" fill="#4a8ba3"/><rect x="357" y="108.0" width="12" height="1.6" fill="#52d0d6"/><circle cx="363" cy="108.8" r="3" fill="#52d0d6"/><rect x="357" y="129.0" width="12" height="1.6" fill="#a3588a"/><circle cx="363" cy="129.8" r="3" fill="#a3588a"/></svg>
<span class="t" style="left:860.3px;top:394.0px;font-size:11px;line-height:11px;color:#8a8a8a;transform:scaleX(0.944);transform-origin:100% 50%;">13M</span>
<span class="t" style="left:860.3px;top:455.0px;font-size:11px;line-height:11px;color:#8a8a8a;transform:scaleX(0.944);transform-origin:100% 50%;">12M</span>
<span class="t" style="left:861.1px;top:522.0px;font-size:11px;line-height:11px;color:#8a8a8a;transform:scaleX(0.981);transform-origin:100% 50%;">11M</span>
<span class="t" style="left:860.3px;top:589.0px;font-size:11px;line-height:11px;color:#8a8a8a;transform:scaleX(0.944);transform-origin:100% 50%;">10M</span>
<span class="t" style="left:866.4px;top:656.0px;font-size:11px;line-height:11px;color:#8a8a8a;transform:scaleX(0.955);transform-origin:100% 50%;">9M</span>
<span class="t" style="left:920.9px;top:672.0px;font-size:11px;line-height:11px;color:#8a8a8a;transform:scaleX(0.953);transform-origin:50% 50%;">Q1</span>
<span class="t" style="left:989.2px;top:672.0px;font-size:11px;line-height:11px;color:#8a8a8a;transform:scaleX(0.953);transform-origin:50% 50%;">Q2</span>
<span class="t" style="left:1057.7px;top:672.0px;font-size:11px;line-height:11px;color:#8a8a8a;transform:scaleX(0.953);transform-origin:50% 50%;">Q3</span>
<span class="t" style="left:1126.3px;top:672.0px;font-size:11px;line-height:11px;color:#8a8a8a;transform:scaleX(0.953);transform-origin:50% 50%;">Q4</span>
<span class="t" style="left:828.4px;top:521.5px;font-size:11px;line-height:11px;color:#737373;transform:rotate(-90deg) scaleX(0.872);transform-origin:50% 50%;">Sales</span>
<span class="t" style="left:1176.0px;top:402.0px;font-size:14px;line-height:14px;color:#737373;transform:scaleX(0.947);">Year</span>
<span class="t" style="left:1196.0px;top:431.0px;font-size:12px;line-height:12px;color:#808080;transform:scaleX(0.962);">2012</span>
<span class="t" style="left:1196.0px;top:452.0px;font-size:12px;line-height:12px;color:#808080;transform:scaleX(0.962);">2013</span>
<span class="t" style="left:1196.0px;top:473.0px;font-size:12px;line-height:12px;color:#808080;transform:scaleX(0.962);">2014</span>
<div style="left:466px;top:489px;width:305px;height:202px;background:rgba(255,255,255,0.68);border:1px solid #e2e2e2;border-radius:4px;"></div>
<span class="t" style="left:478.4px;top:504.0px;font-size:14.5px;line-height:14.5px;color:#636363;transform:scaleX(0.958);font-weight:700;">Top 5 Customers</span>
<svg style="left:466px;top:489px;" width="305" height="202" viewBox="0 0 305 202"><rect x="12" y="41" width="1" height="115" fill="#e8e8e8"/><rect x="12" y="156" width="1" height="8" fill="#ccc"/><rect x="91" y="41" width="1" height="115" fill="#e8e8e8"/><rect x="91" y="156" width="1" height="8" fill="#ccc"/><rect x="170" y="41" width="1" height="115" fill="#e8e8e8"/><rect x="170" y="156" width="1" height="8" fill="#ccc"/><rect x="249" y="41" width="1" height="115" fill="#e8e8e8"/><rect x="249" y="156" width="1" height="8" fill="#ccc"/><rect x="12" y="156" width="238" height="1" fill="#ccc"/><rect x="249" y="41" width="1" height="115" fill="#d9d9d9"/><rect x="11.7" y="46.0" width="226.3" height="19.7" fill="#488ea2"/><rect x="11.7" y="74.1" width="223.7" height="19.7" fill="#488ea2"/><rect x="11.7" y="102.2" width="203.3" height="19.7" fill="#488ea2"/><rect x="11.7" y="130.3" width="180.3" height="19.7" fill="#488ea2"/><rect x="257.3" y="135.5" width="36" height="20.5" fill="#e6e6e6"/><rect x="257.3" y="42.5" width="35.6" height="93" fill="#fcfcfc" stroke="#b8b8b8" stroke-width="1"/><rect x="257.3" y="46.0" width="33.7" height="15.3" fill="#488ea2"/><rect x="257.3" y="69.0" width="33.5" height="15.3" fill="#488ea2"/><rect x="257.3" y="92.0" width="30.4" height="15.3" fill="#488ea2"/><rect x="257.3" y="115.0" width="26.7" height="15.3" fill="#488ea2"/><rect x="257.3" y="138.0" width="21.4" height="15.3" fill="#4c8597"/></svg>
<span class="t" style="left:670.2px;top:540.0px;font-size:10.5px;line-height:10.5px;color:#eef4f6;transform:scaleX(0.925);transform-origin:100% 50%;font-weight:700;">5.69M</span>
<span class="t" style="left:667.6px;top:568.0px;font-size:10.5px;line-height:10.5px;color:#eef4f6;transform:scaleX(0.925);transform-origin:100% 50%;font-weight:700;">5.63M</span>
<span class="t" style="left:685.0px;top:596.0px;font-size:10.5px;line-height:10.5px;color:#8a8a8a;transform:scaleX(0.940);">5.11M</span>
<span class="t" style="left:662.0px;top:624.0px;font-size:10.5px;line-height:10.5px;color:#8a8a8a;transform:scaleX(0.925);">4.54M</span>
<span class="t" style="left:478.3px;top:665.0px;font-size:11px;line-height:11px;color:#8a8a8a;transform:scaleX(0.882);">0</span>
<span class="t" style="left:549.7px;top:665.0px;font-size:11px;line-height:11px;color:#8a8a8a;transform:scaleX(0.936);transform-origin:50% 50%;">2M</span>
<span class="t" style="left:628.7px;top:665.0px;font-size:11px;line-height:11px;color:#8a8a8a;transform:scaleX(0.936);transform-origin:50% 50%;">4M</span>
<span class="t" style="left:707.7px;top:665.0px;font-size:11px;line-height:11px;color:#8a8a8a;transform:scaleX(0.936);transform-origin:50% 50%;">6M</span>
<div style="left:311px;top:560px;width:108px;height:412px;background:rgba(255,255,255,0.68);border:1px solid #eee;border-radius:4px;"></div>
<svg style="left:319px;top:577px;" width="14" height="14" viewBox="0 0 14 14"><circle cx="5.4" cy="5.4" r="3.9" fill="none" stroke="#8c8c8c" stroke-width="1"/><path d="M8.2 8.2 L12.4 12.4" stroke="#8c8c8c" stroke-width="1.9" stroke-linecap="round"/><path d="M8.6 8.6 L12.2 12.2" stroke="#fcfcfc" stroke-width="0.6" stroke-linecap="round"/></svg>
<span class="t" style="left:341.4px;top:578.0px;font-size:12.5px;line-height:12.5px;color:#666;transform:scaleX(0.897);font-weight:700;">Region</span>
<span class="t" style="left:320.2px;top:617.0px;font-size:11.5px;line-height:11.5px;color:#666;transform:scaleX(0.964);">Germany</span>
<div style="left:312px;top:636px;width:106px;height:1px;background:#e0e0e0;"></div>
<span class="t" style="left:320.2px;top:646.0px;font-size:11.5px;line-height:11.5px;color:#666;transform:scaleX(0.957);">Japan</span>
<div style="left:312px;top:665px;width:106px;height:1px;background:#e0e0e0;"></div>
<span class="t" style="left:320.2px;top:675.0px;font-size:11.5px;line-height:11.5px;color:#666;transform:scaleX(0.993);">Nordic</span>
<div style="left:312px;top:694px;width:106px;height:1px;background:#e0e0e0;"></div>
<span class="t" style="left:320.2px;top:704.0px;font-size:11.5px;line-height:11.5px;color:#666;transform:scaleX(0.986);">Spain</span>
<div style="left:312px;top:723px;width:106px;height:1px;background:#e0e0e0;"></div>
<span class="t" style="left:320.2px;top:733.0px;font-size:11.5px;line-height:11.5px;color:#666;transform:scaleX(0.876);">UK</span>
<div style="left:312px;top:752px;width:106px;height:1px;background:#e0e0e0;"></div>
<span class="t" style="left:320.2px;top:762.0px;font-size:11.5px;line-height:11.5px;color:#666;transform:scaleX(0.909);">USA</span>
<div style="left:312px;top:781px;width:106px;height:1px;background:#e0e0e0;"></div>
<div style="left:464px;top:697px;width:779px;height:277px;background:#fff;border:2px solid #12a850;"></div>
<svg style="left:466px;top:699px;overflow:hidden;" width="775" height="273" viewBox="0 0 775 273"><rect x="60" y="43" width="657" height="1" fill="#e0e0e0"/><rect x="60" y="87" width="657" height="1" fill="#e0e0e0"/><rect x="60" y="130" width="657" height="1" fill="#e0e0e0"/><rect x="60" y="173" width="657" height="1" fill="#e0e0e0"/><rect x="68" y="43" width="1" height="130" fill="#c8c8c8"/><rect x="708" y="43" width="1" height="130" fill="#c8c8c8"/><rect x="73.2" y="134.9" width="20.0" height="37.7" fill="#006580"/><rect x="101.6" y="89.8" width="20.0" height="82.8" fill="#006580"/><rect x="130.1" y="88.9" width="20.0" height="83.7" fill="#006580"/><rect x="158.5" y="94.0" width="20.0" height="78.6" fill="#006580"/><rect x="186.9" y="104.1" width="20.0" height="68.5" fill="#006580"/><rect x="215.4" y="81.2" width="20.0" height="91.4" fill="#006580"/><rect x="243.8" y="118.6" width="20.0" height="54.0" fill="#006580"/><rect x="272.2" y="91.0" width="20.0" height="81.6" fill="#006580"/><rect x="300.6" y="92.5" width="20.0" height="80.1" fill="#006580"/><rect x="329.1" y="107.6" width="20.0" height="65.0" fill="#006580"/><rect x="357.5" y="96.9" width="20.0" height="75.7" fill="#006580"/><rect x="385.9" y="110.6" width="20.0" height="62.0" fill="#006580"/><rect x="414.4" y="74.7" width="20.0" height="97.9" fill="#006580"/><rect x="442.8" y="101.1" width="20.0" height="71.5" fill="#006580"/><rect x="471.2" y="80.9" width="20.0" height="91.7" fill="#006580"/><rect x="499.7" y="118.9" width="20.0" height="53.7" fill="#006580"/><rect x="528.1" y="96.9" width="20.0" height="75.7" fill="#006580"/><rect x="556.5" y="84.2" width="20.0" height="88.4" fill="#006580"/><rect x="584.9" y="115.0" width="20.0" height="57.6" fill="#006580"/><rect x="613.4" y="91.3" width="20.0" height="81.3" fill="#006580"/><rect x="641.8" y="84.8" width="20.0" height="87.8" fill="#006580"/><rect x="670.2" y="110.3" width="20.0" height="62.3" fill="#006580"/><rect x="698.7" y="94.3" width="9.3" height="78.3" fill="#006580"/><polyline points="83.2,129.6 111.6,113.3 140.1,109.1 168.5,116.2 196.9,118.0 225.4,106.1 253.8,102.3 282.2,113.6 310.6,107.6 339.1,124.5 367.5,122.5 395.9,97.2 424.4,101.4 452.8,93.7 481.2,102.9 509.7,87.1 538.1,93.7 566.5,95.5 594.9,83.9 623.4,89.5 651.8,99.6 680.2,96.9 708.7,103.8" fill="none" stroke="#8a2d6b" stroke-width="1.2" stroke-linejoin="round"/><rect x="69" y="258" width="639" height="8" fill="#e6e6e6"/><rect x="69" y="258" width="480" height="8" fill="#b3b1ae"/></svg>
<span class="t" style="left:477.8px;top:714.0px;font-size:14.5px;line-height:14.5px;color:#404040;transform:scaleX(0.966);font-weight:700;">Sales Trend</span>
<span class="t" style="left:506.5px;top:744.0px;font-size:11.5px;line-height:11.5px;color:#595959;transform:scaleX(0.926);transform-origin:100% 50%;">6M</span>
<span class="t" style="left:506.5px;top:781.0px;font-size:11.5px;line-height:11.5px;color:#595959;transform:scaleX(0.926);transform-origin:100% 50%;">4M</span>
<span class="t" style="left:506.5px;top:824.0px;font-size:11.5px;line-height:11.5px;color:#595959;transform:scaleX(0.926);transform-origin:100% 50%;">2M</span>
<span class="t" style="left:516.1px;top:867.0px;font-size:11.5px;line-height:11.5px;color:#595959;transform:scaleX(0.937);transform-origin:100% 50%;">0</span>
<span class="t" style="left:1186.8px;top:744.0px;font-size:11.5px;line-height:11.5px;color:#595959;transform:scaleX(0.875);">50</span>
<span class="t" style="left:1186.8px;top:803.0px;font-size:11.5px;line-height:11.5px;color:#595959;transform:scaleX(0.875);">40</span>
<span class="t" style="left:1186.8px;top:867.0px;font-size:11.5px;line-height:11.5px;color:#595959;transform:scaleX(0.875);">30</span>
<span class="t" style="left:474.0px;top:801.9px;font-size:11.5px;line-height:11.5px;color:#595959;transform:rotate(-90deg) scaleX(0.938);transform-origin:50% 50%;">Sales</span>
<span class="t" style="left:1189.5px;top:802.6px;font-size:11.5px;line-height:11.5px;color:#595959;transform:rotate(90deg) scaleX(0.942);transform-origin:50% 50%;">Margin (%)</span>
<span class="t" style="left:826.9px;top:939.0px;font-size:11.5px;line-height:11.5px;color:#404040;transform:scaleX(0.960);transform-origin:50% 50%;">YearMonth</span>
<span class="t" style="left:503.2px;top:874.0px;font-size:12px;line-height:12px;color:#595959;transform:rotate(-40deg) scaleX(0.960);transform-origin:100% 50%;">2012-Jan</span>
<span class="t" style="left:530.3px;top:874.0px;font-size:12px;line-height:12px;color:#595959;transform:rotate(-40deg) scaleX(0.960);transform-origin:100% 50%;">2012-Feb</span>
<span class="t" style="left:558.7px;top:874.0px;font-size:12px;line-height:12px;color:#595959;transform:rotate(-40deg) scaleX(0.960);transform-origin:100% 50%;">2012-Mar</span>
<span class="t" style="left:589.1px;top:874.0px;font-size:12px;line-height:12px;color:#595959;transform:rotate(-40deg) scaleX(0.960);transform-origin:100% 50%;">2012-Apr</span>
<span class="t" style="left:613.5px;top:874.0px;font-size:12px;line-height:12px;color:#595959;transform:rotate(-40deg) scaleX(0.960);transform-origin:100% 50%;">2012-May</span>
<span class="t" style="left:645.3px;top:874.0px;font-size:12px;line-height:12px;color:#595959;transform:rotate(-40deg) scaleX(0.960);transform-origin:100% 50%;">2012-Jun</span>
<span class="t" style="left:677.7px;top:874.0px;font-size:12px;line-height:12px;color:#595959;transform:rotate(-40deg) scaleX(0.960);transform-origin:100% 50%;">2012-Jul</span>
<span class="t" style="left:700.2px;top:874.0px;font-size:12px;line-height:12px;color:#595959;transform:rotate(-40deg) scaleX(0.960);transform-origin:100% 50%;">2012-Aug</span>
<span class="t" style="left:728.6px;top:874.0px;font-size:12px;line-height:12px;color:#595959;transform:rotate(-40deg) scaleX(0.960);transform-origin:100% 50%;">2012-Sep</span>
<span class="t" style="left:759.7px;top:874.0px;font-size:12px;line-height:12px;color:#595959;transform:rotate(-40deg) scaleX(0.960);transform-origin:100% 50%;">2012-Oct</span>
<span class="t" style="left:785.5px;top:874.0px;font-size:12px;line-height:12px;color:#595959;transform:rotate(-40deg) scaleX(0.960);transform-origin:100% 50%;">2012-Nov</span>
<span class="t" style="left:813.9px;top:874.0px;font-size:12px;line-height:12px;color:#595959;transform:rotate(-40deg) scaleX(0.960);transform-origin:100% 50%;">2012-Dec</span>
<span class="t" style="left:844.3px;top:874.0px;font-size:12px;line-height:12px;color:#595959;transform:rotate(-40deg) scaleX(0.960);transform-origin:100% 50%;">2013-Jan</span>
<span class="t" style="left:871.4px;top:874.0px;font-size:12px;line-height:12px;color:#595959;transform:rotate(-40deg) scaleX(0.960);transform-origin:100% 50%;">2013-Feb</span>
<span class="t" style="left:899.9px;top:874.0px;font-size:12px;line-height:12px;color:#595959;transform:rotate(-40deg) scaleX(0.960);transform-origin:100% 50%;">2013-Mar</span>
<span class="t" style="left:930.3px;top:874.0px;font-size:12px;line-height:12px;color:#595959;transform:rotate(-40deg) scaleX(0.960);transform-origin:100% 50%;">2013-Apr</span>
<span class="t" style="left:954.7px;top:874.0px;font-size:12px;line-height:12px;color:#595959;transform:rotate(-40deg) scaleX(0.960);transform-origin:100% 50%;">2013-May</span>
<span class="t" style="left:986.5px;top:874.0px;font-size:12px;line-height:12px;color:#595959;transform:rotate(-40deg) scaleX(0.960);transform-origin:100% 50%;">2013-Jun</span>
<span class="t" style="left:1018.9px;top:874.0px;font-size:12px;line-height:12px;color:#595959;transform:rotate(-40deg) scaleX(0.960);transform-origin:100% 50%;">2013-Jul</span>
<span class="t" style="left:1041.3px;top:874.0px;font-size:12px;line-height:12px;color:#595959;transform:rotate(-40deg) scaleX(0.960);transform-origin:100% 50%;">2013-Aug</span>
<span class="t" style="left:1069.8px;top:874.0px;font-size:12px;line-height:12px;color:#595959;transform:rotate(-40deg) scaleX(0.960);transform-origin:100% 50%;">2013-Sep</span>
<span class="t" style="left:1100.9px;top:874.0px;font-size:12px;line-height:12px;color:#595959;transform:rotate(-40deg) scaleX(0.960);transform-origin:100% 50%;">2013-Oct</span>
<span class="t" style="left:1126.6px;top:874.0px;font-size:12px;line-height:12px;color:#595959;transform:rotate(-40deg) scaleX(0.960);transform-origin:100% 50%;">2013-Nov</span>
<div style="left:463px;top:696px;width:6px;height:6px;background:#12a850;"></div>
<div style="left:851px;top:696px;width:6px;height:6px;background:#12a850;"></div>
<div style="left:1238px;top:696px;width:6px;height:6px;background:#12a850;"></div>
<div style="left:463px;top:830px;width:6px;height:6px;background:#12a850;"></div>
<div style="left:1238px;top:830px;width:6px;height:6px;background:#12a850;"></div>
<div style="left:463px;top:969px;width:6px;height:6px;background:#12a850;"></div>
<div style="left:851px;top:969px;width:6px;height:6px;background:#12a850;"></div>
<div style="left:1238px;top:969px;width:6px;height:6px;background:#12a850;"></div>
<div style="left:1145px;top:963px;width:88px;height:16px;background:#12a850;"></div>
<svg style="left:1148px;top:965px;" width="12" height="12" viewBox="0 0 12 12"><circle cx="6" cy="6" r="4.6" fill="none" stroke="#bfe8cf" stroke-width="1"/><circle cx="6" cy="6" r="2.3" fill="none" stroke="#bfe8cf" stroke-width="1"/><path d="M2.6 2.6 L9.4 9.4 M9.4 2.6 L2.6 9.4" stroke="#bfe8cf" stroke-width="0.8"/></svg>
<span class="t" style="left:1162.0px;top:966.0px;font-size:11px;line-height:11px;color:#e6f6ec;transform:scaleX(0.928);font-weight:700;">(4,8)</span>
<svg style="left:1188px;top:965px;" width="12" height="12" viewBox="0 0 12 12"><rect x="1.6" y="1.6" width="8.8" height="8.8" fill="none" stroke="#e6f6ec" stroke-width="1.4" stroke-dasharray="2.6 1.6"/></svg>
<span class="t" style="left:1201.0px;top:966.0px;font-size:11px;line-height:11px;color:#e6f6ec;transform:scaleX(0.909);font-weight:700;">20 x 4</span>
<div style="left:1250px;top:89px;width:1px;height:892px;background:#e6e6e6;"></div>
<div style="left:1251px;top:89px;width:249px;height:892px;background:#fafafa;"></div>
<svg style="left:1263px;top:108px;" width="22" height="20" viewBox="0 0 22 20"><path d="M3.4 17.4 V11.8 H6.2 V17.4 Z M9.4 17.4 V10 H12.4 V17.4 Z M16.2 17.4 V6 H19.2 V17.4 Z" fill="none" stroke="#5a5560" stroke-width="1"/><path d="M2 12 L8.4 7.2 L12 9.6 L20 2.4" fill="none" stroke="#5a5560" stroke-width="1.1"/></svg>
<span class="t" style="left:1297.5px;top:112.0px;font-size:13px;line-height:13px;color:#404040;transform:scaleX(1.018);-webkit-text-stroke:0.3px #404040;">Chart suggestions</span>
<div style="left:1453px;top:112px;width:37px;height:12px;background:#fff;border:1px solid #ccc;border-radius:6px;"></div>
<div style="left:1447px;top:106px;width:24px;height:24px;background:linear-gradient(#fdfdfd,#e6e6e6);border:1px solid #bdbdbd;border-radius:12px;"></div>
<div style="left:1251px;top:147px;width:249px;height:1px;background:#e6e6e6;"></div>
<span class="t" style="left:1261.3px;top:160.0px;font-size:13px;line-height:13px;color:#333;transform:scaleX(0.954);">Data</span>
<div style="left:1251px;top:185px;width:249px;height:1px;background:#e6e6e6;"></div>
<span class="t" style="left:1261.3px;top:198.0px;font-size:13px;line-height:13px;color:#333;transform:scaleX(1.031);">Sorting</span>
<div style="left:1251px;top:223px;width:249px;height:1px;background:#e6e6e6;"></div>
<span class="t" style="left:1261.3px;top:236.0px;font-size:13px;line-height:13px;color:#333;transform:scaleX(0.997);">Add-ons</span>
<div style="left:1251px;top:261px;width:249px;height:1px;background:#e6e6e6;"></div>
<span class="t" style="left:1261.3px;top:274.0px;font-size:13px;line-height:13px;color:#333;transform:scaleX(0.981);">Appearance</span>
<div style="left:1251px;top:262px;width:2px;height:37px;background:#00913f;"></div>
<div style="left:1251px;top:299px;width:249px;height:1px;background:#e6e6e6;"></div>
<div style="left:1251px;top:300px;width:234px;height:36px;background:#f2f2f2;"></div>
<div style="left:1251px;top:336px;width:234px;height:1px;background:#e6e6e6;"></div>
<svg style="left:1259px;top:313px;" width="10" height="9" viewBox="0 0 10 9"><path d="M1.4 1.8 H8.6 L5 7.4 Z" fill="#404040"/></svg>
<span class="t" style="left:1277.5px;top:312.0px;font-size:13px;line-height:13px;color:#404040;transform:scaleX(0.973);">General</span>
<div style="left:1251px;top:337px;width:234px;height:434px;background:#fff;"></div>
<div style="left:1485px;top:300px;width:15px;height:681px;background:#fdfdfd;"></div>
<svg style="left:1487px;top:304px;" width="11" height="8" viewBox="0 0 11 8"><path d="M1 7 L5.5 1.2 L10 7 Z" fill="#8c8c8c"/></svg>
<div style="left:1488px;top:318px;width:9px;height:603px;background:#8c8c8c;border-radius:4.5px;"></div>
<svg style="left:1487px;top:971px;" width="11" height="8" viewBox="0 0 11 8"><path d="M1 1 L5.5 6.8 L10 1 Z" fill="#8c8c8c"/></svg>
<span class="t" style="left:1261.3px;top:351.0px;font-size:13px;line-height:13px;color:#404040;transform:scaleX(1.018);">Show titles</span>
<span class="t" style="left:1261.3px;top:374.0px;font-size:13px;line-height:13px;color:#404040;transform:scaleX(0.886);font-weight:700;">On</span>
<div style="left:1435.5px;top:361px;width:30px;height:10px;background:#009845;border-radius:5px;"></div>
<div style="left:1452px;top:354px;width:24px;height:24px;background:linear-gradient(#fdfdfd,#e6e6e6);border:1px solid #bdbdbd;border-radius:12px;"></div>
<div style="left:1251px;top:397px;width:234px;height:1px;background:#e6e6e6;"></div>
<span class="t" style="left:1261.3px;top:409.0px;font-size:13px;line-height:13px;color:#404040;transform:scaleX(1.067);">Title</span>
<div style="left:1261px;top:429px;width:214px;height:28px;background:#fff;border:1px solid #b3b3b3;border-radius:3px;"></div>
<div style="left:1431px;top:429px;width:1px;height:28px;background:#b3b3b3;"></div>
<span class="t" style="left:1447.2px;top:435.0px;font-size:15px;line-height:15px;color:#595959;transform:scaleX(1.050);font-style:italic;font-family:'Liberation Serif',serif;">f</span>
<span class="t" style="left:1452.8px;top:437.0px;font-size:14.5px;line-height:14.5px;color:#595959;transform:scaleX(1.000);">&times;</span>
<span class="t" style="left:1268.3px;top:438.0px;font-size:12px;line-height:12px;color:#404040;transform:scaleX(0.968);">Sales Trend</span>
<span class="t" style="left:1261.3px;top:476.0px;font-size:13px;line-height:13px;color:#404040;transform:scaleX(1.042);">Subtitle</span>
<div style="left:1261px;top:496px;width:214px;height:28px;background:#fff;border:1px solid #b3b3b3;border-radius:3px;"></div>
<div style="left:1431px;top:496px;width:1px;height:28px;background:#b3b3b3;"></div>
<span class="t" style="left:1447.2px;top:502.0px;font-size:15px;line-height:15px;color:#595959;transform:scaleX(1.050);font-style:italic;font-family:'Liberation Serif',serif;">f</span>
<span class="t" style="left:1452.8px;top:504.0px;font-size:14.5px;line-height:14.5px;color:#595959;transform:scaleX(1.000);">&times;</span>
<span class="t" style="left:1261.3px;top:543.0px;font-size:13px;line-height:13px;color:#404040;transform:scaleX(1.019);">Footnote</span>
<div style="left:1261px;top:563px;width:214px;height:28px;background:#fff;border:1px solid #b3b3b3;border-radius:3px;"></div>
<div style="left:1431px;top:563px;width:1px;height:28px;background:#b3b3b3;"></div>
<span class="t" style="left:1447.2px;top:569.0px;font-size:15px;line-height:15px;color:#595959;transform:scaleX(1.050);font-style:italic;font-family:'Liberation Serif',serif;">f</span>
<span class="t" style="left:1452.8px;top:571.0px;font-size:14.5px;line-height:14.5px;color:#595959;transform:scaleX(1.000);">&times;</span>
<div style="left:1251px;top:599px;width:234px;height:1px;background:#e6e6e6;"></div>
<div style="left:1261px;top:612px;width:22px;height:22px;background:#009845;border-radius:3px;"></div>
<svg style="left:1266px;top:617px;" width="12" height="12" viewBox="0 0 12 12"><path d="M2.4 6.2 L5 8.6 L9.6 3.4" fill="none" stroke="#fff" stroke-width="2"/></svg>
<span class="t" style="left:1291.2px;top:617.0px;font-size:13px;line-height:13px;color:#404040;transform:scaleX(1.002);">Show hover menu</span>
<div style="left:1251px;top:646px;width:234px;height:1px;background:#e6e6e6;"></div>
<span class="t" style="left:1261.3px;top:661.0px;font-size:13px;line-height:13px;color:#404040;transform:scaleX(1.004);">Show details</span>
<span class="t" style="left:1261.3px;top:684.0px;font-size:13px;line-height:13px;color:#404040;transform:scaleX(0.952);font-weight:700;">Show</span>
<div style="left:1435.5px;top:671px;width:30px;height:10px;background:#009845;border-radius:5px;"></div>
<div style="left:1452.2px;top:664px;width:24px;height:24px;background:linear-gradient(#fdfdfd,#e6e6e6);border:1px solid #bdbdbd;border-radius:12px;"></div>
<span class="t" style="left:1261.3px;top:721.0px;font-size:11.5px;line-height:11.5px;color:#404040;transform:scaleX(0.937);font-style:italic;">Show allows users to choose to view details</span>
<span class="t" style="left:1261.3px;top:736.0px;font-size:11.5px;line-height:11.5px;color:#404040;transform:scaleX(0.936);font-style:italic;">such as descriptions, measures and</span>
<span class="t" style="left:1261.3px;top:751.0px;font-size:11.5px;line-height:11.5px;color:#404040;transform:scaleX(0.945);font-style:italic;">dimensions.</span>
<div style="left:1251px;top:771px;width:234px;height:210px;background:#f2f2f2;"></div>
<div style="left:1251px;top:771px;width:234px;height:1px;background:#e6e6e6;"></div>
<svg style="left:1260px;top:784px;" width="8" height="9" viewBox="0 0 8 9"><path d="M1.8 0.8 L6.6 4.5 L1.8 8.2 Z" fill="#404040"/></svg>
<span class="t" style="left:1277.0px;top:784.0px;font-size:13px;line-height:13px;color:#404040;transform:scaleX(1.002);">Alternate states</span>
<div style="left:1251px;top:808px;width:234px;height:1px;background:#e6e6e6;"></div>
<svg style="left:1260px;top:821px;" width="8" height="9" viewBox="0 0 8 9"><path d="M1.8 0.8 L6.6 4.5 L1.8 8.2 Z" fill="#404040"/></svg>
<span class="t" style="left:1277.0px;top:821.0px;font-size:13px;line-height:13px;color:#404040;transform:scaleX(1.018);">Presentation</span>
<div style="left:1251px;top:845px;width:234px;height:1px;background:#e6e6e6;"></div>
<svg style="left:1260px;top:859px;" width="8" height="9" viewBox="0 0 8 9"><path d="M1.8 0.8 L6.6 4.5 L1.8 8.2 Z" fill="#404040"/></svg>
<span class="t" style="left:1277.0px;top:858.0px;font-size:13px;line-height:13px;color:#404040;transform:scaleX(0.992);">Colors and legend</span>
<div style="left:1251px;top:882px;width:234px;height:1px;background:#e6e6e6;"></div>
<svg style="left:1260px;top:896px;" width="8" height="9" viewBox="0 0 8 9"><path d="M1.8 0.8 L6.6 4.5 L1.8 8.2 Z" fill="#404040"/></svg>
<span class="t" style="left:1277.0px;top:895.0px;font-size:13px;line-height:13px;color:#404040;transform:scaleX(0.971);">X-axis: YearMonth</span>
<div style="left:1251px;top:919px;width:234px;height:1px;background:#e6e6e6;"></div>
<svg style="left:1260px;top:933px;" width="8" height="9" viewBox="0 0 8 9"><path d="M1.8 0.8 L6.6 4.5 L1.8 8.2 Z" fill="#404040"/></svg>
<span class="t" style="left:1277.0px;top:932.0px;font-size:13px;line-height:13px;color:#404040;transform:scaleX(0.935);">Y-axis: Sales</span>
<div style="left:1251px;top:956px;width:234px;height:1px;background:#e6e6e6;"></div>
<svg style="left:1260px;top:970px;" width="8" height="9" viewBox="0 0 8 9"><path d="M1.8 0.8 L6.6 4.5 L1.8 8.2 Z" fill="#404040"/></svg>
<span class="t" style="left:1277.0px;top:970.0px;font-size:13px;line-height:13px;color:#404040;transform:scaleX(0.963);">Y-axis: Margin (%)</span>
</div></body></html>
